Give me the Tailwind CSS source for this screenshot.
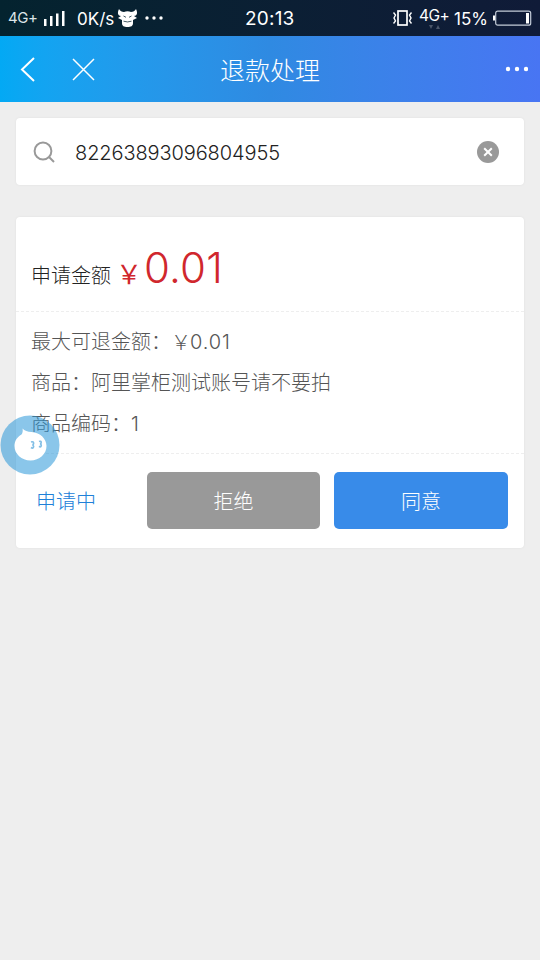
<!DOCTYPE html>
<html lang="zh-CN">
<head>
<meta charset="utf-8">
<title>退款处理</title>
<script src="https://cdn.jsdelivr.net/npm/@tailwindcss/browser@4"></script>
</head>
<body class="relative h-[960px] w-[540px] overflow-hidden bg-[#eeeeee] font-['Inter','Noto_Sans_CJK_SC',sans-serif] font-light">
<div class="flex h-9 items-center bg-linear-to-r from-[#04232f] to-[#101b38] font-normal whitespace-nowrap text-white">
  <div class="flex w-[245px] items-center pl-[8px]">
    <span class="w-[36px] text-[15px] leading-9 tracking-[-0.4px] text-[#dce5e8]">4G+</span>
    <svg class="h-[16px] w-[22px]" viewBox="0 0 22 16" fill="#fff"><path d="M0 9h2.500v7H0zM6 6h2.500v10H6zM12 3.500h2.500V16H12zM18 1h2.500v15H18z"/></svg>
    <span class="ml-[11px] w-[39px] pt-px text-[17px] leading-9">0K/s</span>
    <svg class="ml-[1px] h-[20px] w-[21px]" viewBox="0 0 21 20"><path fill="#fff" d="M2 1C0 5 1 8 4 8L1 10l4 2v3c0 3 2 4 5.500 4s5.500-1 5.500-4v-3l4-2-3-2c3 0 4-3 2-7-1 2-3 3-5 3-2-1-5-1-7 0-2 0-4-1-5-3Z"/><path d="M6.500 8l2.500 1.300M14.500 8l-2.500 1.300M6.500 13.200q4 1.500 8 0" fill="none" stroke="#183340" stroke-width=".8"/></svg>
    <svg class="ml-[7px] h-1 w-[18px]" viewBox="0 0 18 4" fill="#fff"><circle cx="2" cy="2" r="1.700"/><circle cx="9" cy="2" r="1.700"/><circle cx="16" cy="2" r="1.700"/></svg>
  </div>
  <span class="w-[148px] pt-[2px] text-[19px] leading-9 tracking-[0.2px]">20:13</span>
  <svg class="h-[18px] w-5" viewBox="0 0 20 18" fill="none" stroke="#fff"><rect x="5" y="2" width="9" height="14" stroke-width="1.700"/><path d="M.5 3.500l2 2.500-1.500 3 1.500 3-2 2.500M18.500 3.500L16.500 6 18 9l-1.500 3 2 2.500" stroke-width="1.400"/></svg>
  <div class="ml-[6px] flex w-[35px] flex-col">
    <span class="h-[17px] text-[15.5px] leading-[18px] tracking-[-0.5px]">4G+</span>
    <svg class="mt-[1px] ml-[10px] h-[5px] w-3" viewBox="0 0 12 5" fill="#4a5569"><path d="M0 0h4L2 4zM7 4h4L9 0z"/></svg>
  </div>
  <span class="w-[38px] pt-[2px] text-[17px] leading-9">15%</span>
  <svg class="h-4 w-[40px]" viewBox="0 0 40 16"><rect x="3.700" y="1.200" width="35" height="14" rx="2" fill="none" stroke="#c3cbd8" stroke-width="1.200"/><path d="M1 5.500h2v5H1zM34 3h3v10.500h-3z" fill="#fff"/></svg>
</div>

<header class="flex h-[66px] items-center bg-linear-to-r from-[#03a9f4] via-[#2f8ae2] to-[#4875f3] text-white">
  <svg class="ml-[18px] h-[26px] w-[18px]" viewBox="0 0 18 26" fill="none" stroke="#fff" stroke-width="2"><path d="M16 2L4 13.500 16 25"/></svg>
  <svg class="ml-[35px] h-[24px] w-[24px]" viewBox="0 0 24 24" fill="none" stroke="#fff" stroke-width="1.500"><path d="M2 2l21 21M23 2l-21 21"/></svg>
  <h1 class="ml-[125px] w-[286px] pt-[4px] text-[25px] leading-[62px] whitespace-nowrap">退款处理</h1>
  <svg class="-ml-[2px] h-[6px] w-6" viewBox="0 0 24 6" fill="#fff"><circle cx="4" cy="3" r="2.200"/><circle cx="13" cy="3" r="2.200"/><circle cx="22" cy="3" r="2.200"/></svg>
</header>

<main class="px-4 pt-4">
  <div class="flex h-[67px] items-center rounded-[4px] bg-white px-[17px] shadow-[0_0_2px_#dddddd]">
    <svg class="h-6 w-6" viewBox="0 0 24 24" fill="none" stroke="#999" stroke-width="2"><circle cx="10" cy="11" r="8.400"/><path d="M16 17l5 5"/></svg>
    <span class="ml-[18px] flex-1 pt-[2px] text-[20px] leading-8 tracking-[-0.1px] text-[#222]">82263893096804955</span>
    <svg class="mr-[8px] h-[22px] w-[22px]" viewBox="0 0 22 22"><circle cx="11" cy="11" r="11" fill="#999"/><path d="M7.200 7.200l7.600 7.600M14.800 7.200l-7.600 7.600" stroke="#fff" stroke-width="2"/></svg>
  </div>

  <section class="mt-8 h-[331px] rounded-[4px] bg-white shadow-[0_0_2px_#dddddd]">
    <div class="flex h-[95px] items-baseline border-b border-dashed border-[#eeeeee] pt-[21px] pl-[15px] whitespace-nowrap">
      <span class="w-[83px] text-[20px] text-[#222]">申请金额</span>
      <span class="w-[30px] pl-[2px] text-[26px] font-['Noto_Sans_CJK_SC',sans-serif] font-normal text-[#d0272d]"><span class="relative top-px">￥</span></span>
      <span class="text-[42px] leading-[60px] tracking-[0.2px] text-[#d0272d]">0.01</span>
    </div>
    <div class="flex h-[142px] flex-col border-b border-dashed border-[#eeeeee] pt-[10px] pl-[15px] text-[20px] leading-[41px] text-[#555]">
      <p class="flex"><span>最大可退金额：</span><span class="-mt-px w-[19px] font-['Noto_Sans_CJK_SC',sans-serif]">￥</span><span class="tracking-[0.9px]">0.01</span></p>
      <p>商品：阿里掌柜测试账号请不要拍</p>
      <p>商品编码：1</p>
    </div>
    <div class="flex items-center pt-[18px] pl-[20px] text-[20px]">
      <span class="w-[111px] pt-[2px] text-[#2080d8]">申请中</span>
      <button class="h-[57px] w-[173px] rounded-[5px] bg-[#999] pt-[2px] text-white">拒绝</button>
      <button class="ml-[14px] h-[57px] w-[174px] rounded-[5px] bg-[#388be9] pt-[2px] text-white">同意</button>
    </div>
  </section>
</main>

<svg class="absolute top-[415px] left-0 h-[60px] w-[60px]" viewBox="0 0 60 60"><circle cx="30" cy="30" r="29.500" fill="#2795d9" fill-opacity=".54"/><path fill="#fff" d="M22.500 13.500c2 2.500 5 3.300 9 3.500 9 .5 15 7 15 14 0 8-7 14.500-16 14.500S14.500 39 14.500 31c0-5 2.500-9 7-11.500 1.200-1.500 1.500-4 1-6Z"/><path d="M31 27c3-1 3 1.500 2 3 1.500 2 0 4-2 2.500M39 26.500c2.500-1 2.500 1 1.700 2.500 1.300 2 0 3.500-1.700 2.300" fill="none" stroke="#83bfe5" stroke-width="1.700"/></svg>
</body>
</html>
